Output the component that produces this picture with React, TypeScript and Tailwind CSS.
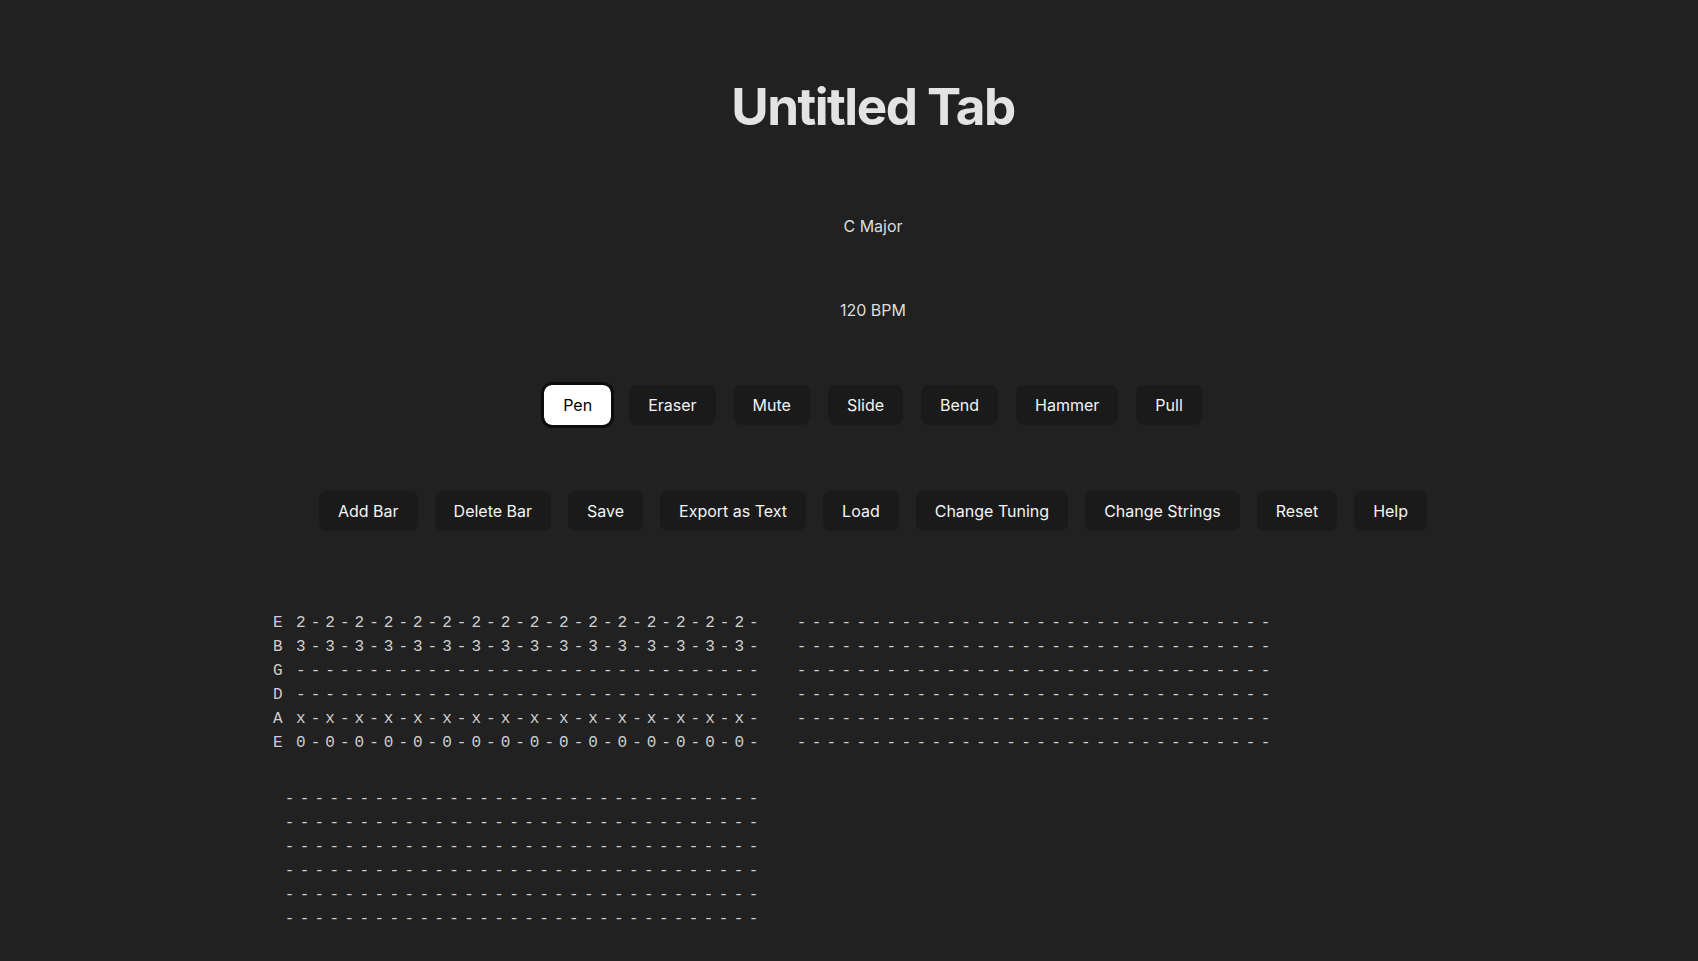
import { useState } from 'react';

const tools = ['Pen', 'Eraser', 'Mute', 'Slide', 'Bend', 'Hammer', 'Pull'];
const actions = [
    'Add Bar',
    'Delete Bar',
    'Save',
    'Export as Text',
    'Load',
    'Change Tuning',
    'Change Strings',
    'Reset',
    'Help',
];
const tuning = ['E', 'B', 'G', 'D', 'A', 'E'];
const STEPS = 32;

type Bar = string[][];

const makeBar = (notes: (string | null)[]): Bar =>
    notes.map(note =>
        Array.from({ length: STEPS }, (_, i) => (note && i % 2 === 0 ? note : '-')),
    );

const initialBars: Bar[] = [
    makeBar(['2', '3', null, null, 'x', '0']),
    makeBar([null, null, null, null, null, null]),
    makeBar([null, null, null, null, null, null]),
];

function TabBar({ bar, showLabels }: { bar: Bar; showLabels: boolean }) {
    return (
        <div className="flex w-[488px] flex-col">
            {bar.map((row, s) => (
                <div key={s} className="flex h-6 items-center leading-6">
                    <span className={showLabels ? 'mr-[11px]' : 'mr-[9px]'}>
                        {showLabels ? tuning[s] : ''}
                    </span>
                    {row.map((cell, i) => (
                        <span key={i} className="flex-1 text-center">
                            {cell}
                        </span>
                    ))}
                </div>
            ))}
        </div>
    );
}

export default function App() {
    const [tool, setTool] = useState('Pen');
    const [bars] = useState<Bar[]>(initialBars);

    return (
        <div className="min-h-screen bg-[#212121] pl-12 font-['Inter',sans-serif] text-[rgba(255,255,255,0.87)]">
            <div className="flex flex-col items-center pt-[78px] pb-10">
                <h1 className="text-[51.2px] leading-[1.1] font-bold tracking-[-0.03em] text-[#e3e3e3]">
                    Untitled Tab
                </h1>
                <div className="mt-[80px] text-base leading-6 text-[#dcdcdc]">C Major</div>
                <div className="mt-[60px] text-base leading-6 text-[#dcdcdc]">120 BPM</div>

                <div className="mt-[63px] flex gap-[18px]">
                    {tools.map(t => (
                        <button
                            key={t}
                            onClick={() => setTool(t)}
                            className={
                                t === tool
                                    ? 'h-[40px] rounded-lg bg-white px-[19px] text-base font-normal text-black outline-[3px] outline-solid outline-[#0c0c0c]'
                                    : 'h-[40px] rounded-lg bg-[#1a1a1a] px-[19px] text-base font-normal text-[#f4f4f4]'
                            }
                        >
                            {t}
                        </button>
                    ))}
                </div>

                <div className="mt-[66px] flex gap-[17px]">
                    {actions.map(a => (
                        <button
                            key={a}
                            className="h-[40px] rounded-lg bg-[#1a1a1a] px-[19px] text-base font-normal text-[#f4f4f4]"
                        >
                            {a}
                        </button>
                    ))}
                </div>

                <div className="mt-[80px] flex w-[1200px] flex-wrap gap-x-6 gap-y-8 font-['Liberation_Mono',monospace] text-base text-[#cfcfcf]">
                    {bars.map((bar, i) => (
                        <TabBar key={i} bar={bar} showLabels={i === 0} />
                    ))}
                </div>
            </div>
        </div>
    );
}
